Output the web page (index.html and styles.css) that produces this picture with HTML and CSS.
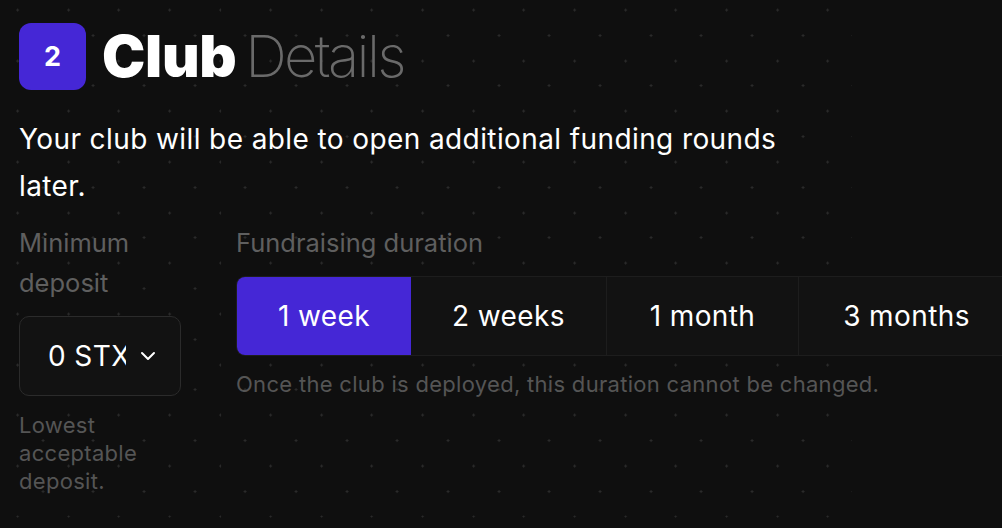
FILE: index.html
```html
<!DOCTYPE html>
<html>
<head>
<meta charset="utf-8">
<link rel="stylesheet" href="styles.css">
</head>
<body>
<div class="page">
  <header class="title">
    <div class="step">2</div>
    <h1><span class="strong">Club</span> <span class="thin">Details</span></h1>
  </header>
  <p class="intro">Your club will be able to open additional funding rounds later.</p>
  <div class="fields">
    <div class="col-deposit">
      <div class="label">Minimum deposit</div>
      <div class="select">
        <span class="select-value">0 STX</span>
        <svg class="chev" width="16" height="10" viewBox="0 0 16 10"><path d="M2 2 L8 8 L14 2" fill="none" stroke="#fff" stroke-width="2" stroke-linecap="round" stroke-linejoin="round"/></svg>
      </div>
      <div class="hint-small">Lowest acceptable deposit.</div>
    </div>
    <div class="col-duration">
      <div class="label">Fundraising duration</div>
      <div class="segments">
        <div class="seg active">1 week</div>
        <div class="seg">2 weeks</div>
        <div class="seg">1 month</div>
        <div class="seg">3 months</div>
      </div>
      <div class="hint">Once the club is deployed, this duration cannot be changed.</div>
    </div>
  </div>
</div>
</body>
</html>
```
FILE: styles.css
```css
html, body {
  margin: 0;
  padding: 0;
  background: #0f0f0f;
  overflow: hidden;
}
body {
  width: 1002px;
  height: 528px;
  position: relative;
  font-family: Inter, "Noto Sans", sans-serif;
  color: #fff;
}
body::before {
  content: "";
  position: absolute;
  left: 0;
  top: 0;
  width: 852px;
  height: 528px;
  background-image: url("data:image/svg+xml,%3Csvg xmlns='http://www.w3.org/2000/svg' width='50.67' height='50.67'%3E%3Cg fill='%232a2a2a'%3E%3Crect x='16' y='9.5' width='3' height='1'/%3E%3Crect x='17' y='8.5' width='1' height='3'/%3E%3Crect x='41.3' y='34.8' width='3' height='1'/%3E%3Crect x='42.3' y='33.8' width='1' height='3'/%3E%3C/g%3E%3C/svg%3E");
  background-size: 50.67px 50.67px;
  z-index: 0;
}
.page {
  position: relative;
  z-index: 1;
  padding: 23px 0 0 19px;
}
.title {
  display: flex;
  align-items: center;
  gap: 16px;
  height: 67px;
}
.step {
  width: 67px;
  height: 67px;
  border-radius: 12px;
  background: #4527d6;
  display: flex;
  align-items: center;
  justify-content: center;
  font-size: 27px;
  font-weight: 700;
}
h1 {
  margin: 0;
  font-size: 58px;
  line-height: 67px;
  white-space: nowrap;
  word-spacing: -5px;
}
.strong { font-weight: 900; letter-spacing: -0.3px; }
.thin { font-weight: 200; color: #6a6a6a; letter-spacing: -2.7px; }
.intro {
  margin: 26px 0 0 0;
  width: 790px;
  font-size: 28px;
  line-height: 47px;
  letter-spacing: 0.4px;
  font-weight: 400;
}
.fields {
  display: flex;
  gap: 55px;
  margin-top: 13px;
}
.col-deposit { width: 162px; flex: none; }
.label {
  font-size: 25.5px;
  line-height: 40px;
  color: #5f5f5f;
}
.select {
  margin-top: 13px;
  height: 80px;
  box-sizing: border-box;
  border: 1px solid #2b2b2b;
  border-radius: 10px;
  background: #121212;
  display: flex;
  align-items: center;
  padding-left: 28px;
}
.select-value {
  width: 78px;
  overflow: hidden;
  white-space: nowrap;
  font-size: 28px;
  letter-spacing: 0.4px;
}
.chev { margin-left: 14px; }
.hint-small {
  margin-top: 15px;
  font-size: 22px;
  line-height: 28px;
  letter-spacing: 0.3px;
  color: #555;
}
.col-duration { flex: 1; min-width: 0; }
.segments {
  margin-top: 13px;
  display: flex;
  height: 80px;
  box-sizing: border-box;
  border: 1px solid #1d1d1d;
  border-right: none;
  border-radius: 9px 0 0 9px;
  background: #121212;
  width: 800px;
}
.seg {
  display: flex;
  align-items: center;
  justify-content: center;
  font-size: 28px;
  letter-spacing: 0.4px;
  border-right: 1px solid #1d1d1d;
}
.seg:nth-child(1) { width: 174px; }
.seg:nth-child(2) { width: 195px; }
.seg:nth-child(3) { width: 191px; }
.seg:nth-child(4) { width: 215px; border-right: none; }
.seg.active {
  background: #4527d6;
  border-radius: 8px 0 0 8px;
  border-right: none;
}
.hint {
  margin-top: 14px;
  font-size: 22px;
  line-height: 28px;
  letter-spacing: 0.3px;
  color: #555;
}
```
